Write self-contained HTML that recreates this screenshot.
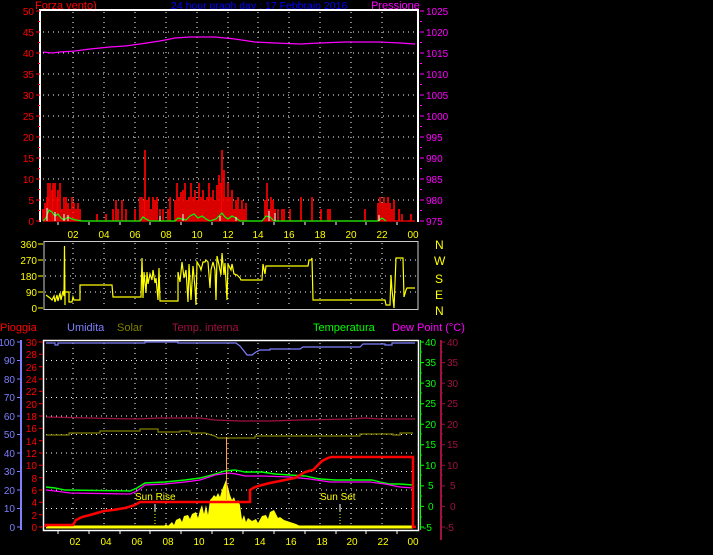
<!DOCTYPE html>
<html><head><meta charset="utf-8"><style>
html,body{margin:0;padding:0;background:#000;width:713px;height:555px;overflow:hidden}
svg{display:block}
text{font-family:"Liberation Sans",sans-serif;font-size:10px}
</style></head><body>
<svg width="713" height="555" viewBox="0 0 713 555" xmlns="http://www.w3.org/2000/svg">
<rect width="713" height="555" fill="#000"/>
<!-- titles -->
<text x="35" y="9" fill="#f00" style="font-size:11px">Forza vento)</text>
<text x="171" y="9" fill="#0000ff" style="font-size:10.5px">24 hour graph day : 17 Febbraio 2016</text>
<text x="371" y="9" fill="#f0f" style="font-size:11px">Pressione</text>

<!-- CHART 1 -->
<g stroke="#fff" stroke-dasharray="1 4" stroke-width="1">
<path d="M43 32H418M43 53H418M43 74H418M43 95H418M43 116H418M43 137H418M43 158H418M43 179H418M43 200H418"/>
<path d="M73 12V222M104 12V222M135 12V222M166 12V222M197 12V222M228 12V222M258 12V222M289 12V222M320 12V222M351 12V222M382 12V222"/>
</g>
<path d="M40 222V10H418V222" fill="none" stroke="#fff" stroke-width="2"/>
<g fill="#f00" text-anchor="end">
<text x="34" y="15">50</text><text x="34" y="36">45</text><text x="34" y="57">40</text><text x="34" y="78">35</text><text x="34" y="99">30</text><text x="34" y="120">25</text><text x="34" y="141">20</text><text x="34" y="162">15</text><text x="34" y="183">10</text><text x="34" y="204">5</text><text x="34" y="225">0</text>
</g>
<path d="M36 11H40M36 32H40M36 53H40M36 74H40M36 95H40M36 116H40M36 137H40M36 158H40M36 179H40M36 200H40M36 221H40M38 21.5H40M38 42.5H40M38 63.5H40M38 84.5H40M38 105.5H40M38 126.5H40M38 147.5H40M38 168.5H40M38 189.5H40M38 210.5H40" stroke="#f00"/>
<g fill="#f0f">
<text x="426" y="15">1025</text><text x="426" y="36">1020</text><text x="426" y="57">1015</text><text x="426" y="78">1010</text><text x="426" y="99">1005</text><text x="426" y="120">1000</text><text x="426" y="141">995</text><text x="426" y="162">990</text><text x="426" y="183">985</text><text x="426" y="204">980</text><text x="426" y="225">975</text>
</g>
<path d="M420 11H424M420 32H424M420 53H424M420 74H424M420 95H424M420 116H424M420 137H424M420 158H424M420 179H424M420 200H424M420 221H424M420 21.5H422M420 42.5H422M420 63.5H422M420 84.5H422M420 105.5H422M420 126.5H422M420 147.5H422M420 168.5H422M420 189.5H422M420 210.5H422" stroke="#f0f"/>
<polyline fill="none" stroke="#f0f" stroke-width="1.2" points="43,52 52,53 60,52 75,51 90,49 110,47 125,46 140,44 160,41 175,38 190,37 215,37 235,39 255,42 275,43 300,44 320,43 345,42 380,42 400,43 415,44"/>
<path d="M43 221H415" stroke="#f00" stroke-width="1.2"/>
<path stroke="#f00" stroke-width="1.7" d="M43 221V209M45 221V203M47 221V197M48 221V183M50 221V183M52 221V190M53 221V183M55 221V183M57 221V197M58 221V190M60 221V183M62 221V209M64 221V197M66 221V197M68 221V203M70 221V209M72 221V197M74 221V203M76 221V209M78 221V203M80 221V209M97 221V214M106 221V214M113 221V209M116 221V200M118 221V209M122 221V200M126 221V209M135 221V209M140 221V197M142 221V197M144 221V200M145 221V150M147 221V200M149 221V197M151 221V209M153 221V197M155 221V200M157 221V197M160 221V209M163 221V209M168 221V209M170 221V197M175 221V200M177 221V183M179 221V197M181 221V192M183 221V190M185 221V183M187 221V200M189 221V197M191 221V183M193 221V197M195 221V190M197 221V200M199 221V183M201 221V197M203 221V190M205 221V200M207 221V197M209 221V183M211 221V197M213 221V190M215 221V200M217 221V185M219 221V175M221 221V183M222 221V150M224 221V170M226 221V197M228 221V183M230 221V197M232 221V190M234 221V209M236 221V200M238 221V197M240 221V209M242 221V200M244 221V209M246 221V203M265 221V200M267 221V183M269 221V209M271 221V197M273 221V200M275 221V209M278 221V209M282 221V209M284 221V209M290 221V209M301 221V197M312 221V197M321 221V209M328 221V209M330 221V209M365 221V209M378 221V203M380 221V197M382 221V203M384 221V197M386 221V203M388 221V197M390 221V203M392 221V209M394 221V200M399 221V209M402 221V214M411 221V214"/>
<polyline fill="none" stroke="#0f0" stroke-width="1.2" points="43,221 46,218 49,210 52,212 55,216 58,214 61,218 64,220 68,217 72,219 76,220 82,221 140,221 143,217 146,219 150,221 175,221 178,218 182,219 186,220 190,216 194,214 198,218 202,216 206,219 210,221 216,219 219,216 222,213 225,217 228,219 232,216 236,218 240,221 262,221 266,216 270,217 274,221 378,221 382,218 386,221"/>
<path stroke="#fff" stroke-width="1" d="M47 221V208M55 221V212M64 221V214M68 221V215M160 221V216M183 221V214M220 221V216M236 221V217M269 221V211M275 221V213M379 221V215"/>
<path stroke="#fff" d="M58 222V225M89 222V225M120 222V225M150 222V225M181 222V225M212 222V225M243 222V225M274 222V225M305 222V225M336 222V225M366 222V225M397 222V225"/>

<!-- shared time labels -->
<g fill="#ff0" text-anchor="middle">
<text x="73" y="238">02</text><text x="104" y="238">04</text><text x="135" y="238">06</text><text x="166" y="238">08</text><text x="197" y="238">10</text><text x="228" y="238">12</text><text x="258" y="238">14</text><text x="289" y="238">16</text><text x="320" y="238">18</text><text x="351" y="238">20</text><text x="382" y="238">22</text><text x="413" y="238">00</text>
</g>

<!-- CHART 2 -->
<g stroke="#fff" stroke-dasharray="1 4">
<path d="M45 260H416M45 276H416M45 292H416"/>
<path d="M73 243V308M104 243V308M135 243V308M166 243V308M197 243V308M228 243V308M258 243V308M289 243V308M320 243V308M351 243V308M382 243V308"/>
</g>
<rect x="44" y="241.5" width="374" height="68" fill="none" stroke="#ccc" stroke-width="1"/>
<g fill="#ff0" text-anchor="end">
<text x="37" y="248">360</text><text x="37" y="264">270</text><text x="37" y="280">180</text><text x="37" y="296">90</text><text x="37" y="312">0</text>
</g>
<path d="M38 244H43M38 260H43M38 276H43M38 292H43M38 308H43" stroke="#ff0"/>
<g fill="#ff0" style="font-size:12px">
<text x="435" y="249" style="font-size:12px">N</text><text x="434" y="265" style="font-size:12px">W</text><text x="435" y="283" style="font-size:12px">S</text><text x="435" y="299" style="font-size:12px">E</text><text x="435" y="315" style="font-size:12px">N</text>
</g>
<polyline fill="none" stroke="#ff0" stroke-width="1.2" points="46,295 50,298 52,300 54,296 55,302 57,295 58,301 60,293 61,300 63,291 64,296 64.5,246 65,305 65,292 69,292 69,302 72,302 73,297 74,300 80,300 80,285 112,285 113,297 141,297 142,258 143,298 144,272 146,293 147,272 148,284 150,274 152,280 153,270 155,283 156,278 158,300 159,268 160,301 178,301 178,272 180,282 182,262 184,278 186,270 188,302 189,264 191,300 193,266 195,288 196,305 197,262 200,267 201,270 203,262 205,262 206,260 208,262 210,288 211,270 213,262 215,270 216,300 217,256 219,265 221,275 222,253 224,275 225,263 227,300 228,264 231,270 232,264 234,274 237,275 240,278 241,280 262,280 263,264 265,274 266,266 308,266 309,260 311,260 312,258 313,300 385,300 386,305 390,305 391,275 392,290 394,308 396,258 403,258 404,297 406,290 407,288 410,288 415,288"/>

<!-- CHART 3 legend -->
<text x="0" y="331" fill="#f00" style="font-size:11px">Pioggia</text>
<text x="67" y="331" fill="#7f7fff" style="font-size:11px">Umidita</text>
<text x="117" y="331" fill="#808000" style="font-size:11px">Solar</text>
<text x="172" y="331" fill="#a01040" style="font-size:11px">Temp. interna</text>
<text x="313" y="331" fill="#0f0" style="font-size:11px">Temperatura</text>
<text x="392" y="331" fill="#f0f" style="font-size:11px">Dew Point (°C)</text>
<g stroke="#fff" stroke-dasharray="1 4">
<path d="M46 360.5H416M46 379H416M46 397.5H416M46 416H416M46 434.5H416M46 453H416M46 471.5H416M46 490H416M46 508.5H416"/>
<path d="M73 343V526M104 343V526M135 343V526M166 343V526M197 343V526M228 343V526M258 343V526M289 343V526M320 343V526M351 343V526M382 343V526"/>
</g>
<rect x="43.5" y="340.5" width="375" height="190" fill="none" stroke="#fff" stroke-width="1.5"/>
<!-- left axes -->
<path d="M21 340V530" stroke="#7f7fff" stroke-width="2"/>
<g fill="#7f7fff" text-anchor="end">
<text x="15" y="346">100</text><text x="15" y="364">90</text><text x="15" y="383">80</text><text x="15" y="401">70</text><text x="15" y="420">60</text><text x="15" y="438">50</text><text x="15" y="457">40</text><text x="15" y="475">30</text><text x="15" y="494">20</text><text x="15" y="512">10</text><text x="15" y="531">0</text>
</g>
<path stroke="#7f7fff" d="M17 342H21M17 360.5H21M17 379H21M17 397.5H21M17 416H21M17 434.5H21M17 453H21M17 471.5H21M17 490H21M17 508.5H21M17 527H21"/>
<g fill="#f00" text-anchor="end">
<text x="37" y="346">30</text><text x="37" y="358">28</text><text x="37" y="371">26</text><text x="37" y="383">24</text><text x="37" y="395">22</text><text x="37" y="408">20</text><text x="37" y="420">18</text><text x="37" y="432">16</text><text x="37" y="445">14</text><text x="37" y="457">12</text><text x="37" y="469">10</text><text x="37" y="482">8</text><text x="37" y="494">6</text><text x="37" y="506">4</text><text x="37" y="519">2</text><text x="37" y="531">0</text>
</g>
<path stroke="#f00" d="M39 342H43M39 354.3H43M39 366.7H43M39 379H43M39 391.3H43M39 403.7H43M39 416H43M39 428.3H43M39 440.7H43M39 453H43M39 465.3H43M39 477.7H43M39 490H43M39 502.3H43M39 514.7H43M39 527H43"/>
<!-- right axes -->
<path d="M420.5 340V530" stroke="#0f0" stroke-width="1"/>
<g fill="#0f0">
<text x="425" y="346">40</text><text x="425" y="366">35</text><text x="425" y="387">30</text><text x="425" y="407">25</text><text x="425" y="428">20</text><text x="425" y="448">15</text><text x="425" y="469">10</text><text x="428" y="489">5</text><text x="428" y="510">0</text><text x="423" y="531">-5</text>
</g>
<path stroke="#0f0" d="M420 342H424M420 362.6H424M420 383.1H424M420 403.7H424M420 424.2H424M420 444.8H424M420 465.3H424M420 485.9H424M420 506.4H424M420 527H424M420 352H422M420 373H422M420 393H422M420 414H422M420 434H422M420 455H422M420 475H422M420 496H422M420 517H422"/>
<path d="M441 340V540" stroke="#a01040" stroke-width="2"/>
<g fill="#a01040">
<text x="447" y="346">40</text><text x="447" y="366">35</text><text x="447" y="387">30</text><text x="447" y="407">25</text><text x="447" y="428">20</text><text x="447" y="448">15</text><text x="447" y="469">10</text><text x="450" y="489">5</text><text x="450" y="510">0</text><text x="445" y="531">-5</text>
</g>
<path stroke="#a01040" d="M441 342H445M441 362.6H445M441 383.1H445M441 403.7H445M441 424.2H445M441 444.8H445M441 465.3H445M441 485.9H445M441 506.4H445M441 527H445M441 352H443M441 373H443M441 393H443M441 414H443M441 434H443M441 455H443M441 475H443M441 496H443M441 517H443"/>
<!-- data -->
<polyline fill="none" stroke="#7f7fff" stroke-width="1.2" points="46,343 55,343 55,345 58,345 58,343 145,343 145,342 165,342 178,342 178,343 236,343 240,346 244,351 247,355 252,355 256,352 260,350 270,350 270,349 300,349 303,347 360,347 363,344 385,344 385,345 392,345 392,343 415,343"/>
<polyline fill="none" stroke="#a01040" stroke-width="1.2" points="46,417 90,418 135,419 160,418 200,418 215,420 240,421 270,421 300,420 350,419 365,418 380,419 415,419"/>
<polyline fill="none" stroke="#808000" stroke-width="1.2" points="46,435 69,435 69,433 100,433 100,431 140,431 140,429 158,429 158,432 180,432 180,431 190,431 190,433 205,433 215,436 218,438 255,438 255,436 360,436 360,434 393,434 393,435 400,435 400,433 413,433"/>
<polyline fill="none" stroke="#0f0" stroke-width="1.4" points="46,487 55,488 65,490 130,491 137,488 145,483 165,482 185,480 200,478 215,474 225,471 235,470 245,472 262,472 275,474 290,475 305,476 320,479 335,480 372,480 380,482 390,484 400,484 413,485"/>
<polyline fill="none" stroke="#f0f" stroke-width="1.2" points="46,490 55,491 70,493 130,494 137,491 145,485 165,484 185,482 200,480 215,475 228,473 236,474 245,476 262,476 290,477 310,479 330,482 370,482 385,484 400,487 413,488"/>
<!-- solar fill -->
<path fill="#ff0" d="M163,527 L166,524 168,526 172,522 174,525 176,520 180,518 182,522 184,516 188,515 190,519 192,514 196,512 198,518 200,510 202,505 204,514 206,505 208,515 210,500 212,498 214,495 216,497 218,493 220,497 222,490 224,485 226,480 228,487 230,495 232,500 234,497 236,503 238,500 240,505 242,520 244,515 246,522 248,518 252,521 256,519 258,523 262,516 266,515 268,519 270,512 274,510 276,514 278,518 280,517 284,520 290,522 296,524 300,526 305,527 Z"/>
<path d="M46 527H413" stroke="#ff0" stroke-width="3"/>
<path d="M226.5 437V500" stroke="#ffa040" stroke-width="1"/>
<polyline fill="none" stroke="#f00" stroke-width="2.5" points="46,527 46,525 73,525 76,520 82,517 90,515 97,513 104,511 113,510 125,508 135,505 140,502 250,502 250,490 255,487 262,485 270,483 285,480 295,478 305,472 313,470 317,466 322,461 328,458 331,457 413,457 413,527 416,527"/>
<text x="135" y="500" fill="#ff0">Sun Rise</text>
<text x="320" y="500" fill="#ff0">Sun Set</text>
<path d="M155 504V511" stroke="#fff"/><path d="M155 511V526" stroke="#ff0" stroke-dasharray="1 2"/>
<path d="M340 504V511" stroke="#fff"/><path d="M340 511V526" stroke="#ff0" stroke-dasharray="1 2"/>
<path stroke="#fff" d="M58 531V534M89 531V534M120 531V534M150 531V534M181 531V534M212 531V534M243 531V534M274 531V534M305 531V534M336 531V534M366 531V534M397 531V534"/>
<g fill="#ff0" text-anchor="middle">
<text x="75" y="545">02</text><text x="106" y="545">04</text><text x="137" y="545">06</text><text x="168" y="545">08</text><text x="199" y="545">10</text><text x="229" y="545">12</text><text x="260" y="545">14</text><text x="291" y="545">16</text><text x="322" y="545">18</text><text x="352" y="545">20</text><text x="383" y="545">22</text><text x="413" y="545">00</text>
</g>
</svg>
</body></html>
